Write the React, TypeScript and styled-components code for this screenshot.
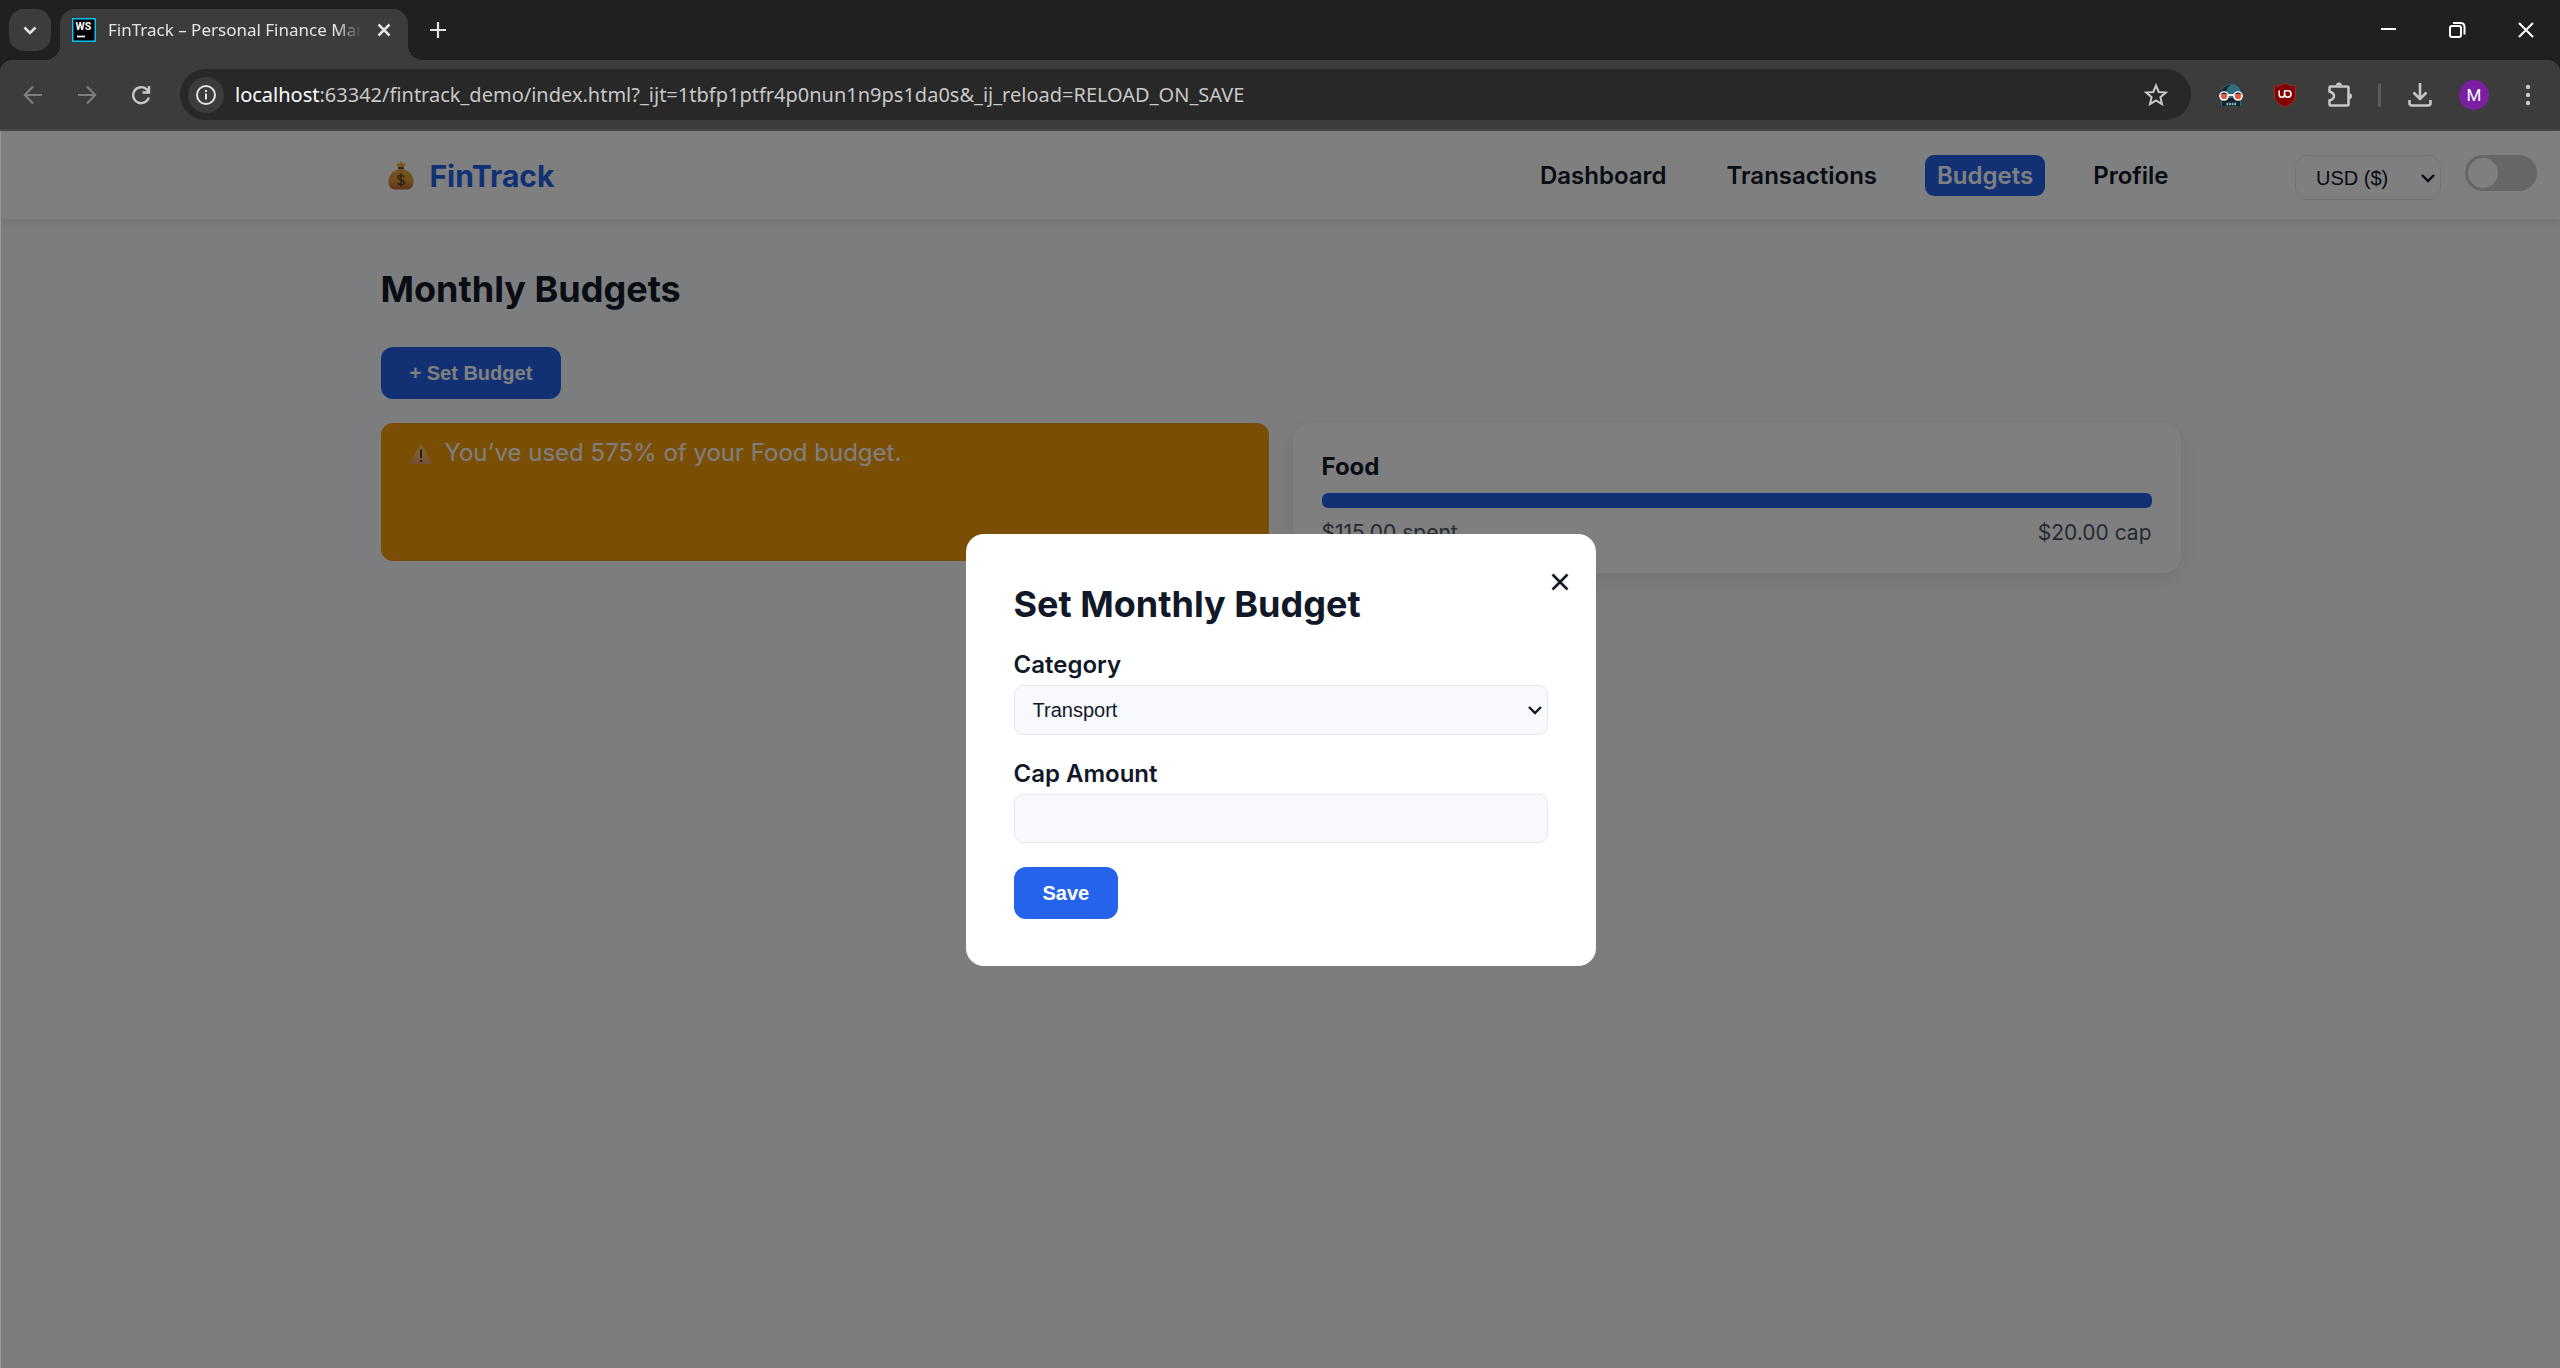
import React, { useState } from "react";
import styled, { createGlobalStyle, css } from "styled-components";

const GlobalStyle = createGlobalStyle`
  *, *::before, *::after { box-sizing: border-box; }
  body { margin: 0; background: #7c7d7e; }
  button, select, input { font: inherit; color: inherit; margin: 0; }
  h1, h2, h3, p { margin: 0; }
`;

const uiFont = `"Noto Sans", "Open Sans", sans-serif`;
const pageFont = `Inter, "Liberation Sans", sans-serif`;
const controlFont = `"Liberation Sans", Arial, sans-serif`;

const Shell = styled.div`
  display: flex;
  flex-direction: column;
  min-height: 100vh;
  background: #1f2120;
`;

/* ---------- browser window ---------- */

const IconButton = styled.button<{ $w?: number; $dim?: boolean; $bright?: boolean }>`
  display: grid;
  place-items: center;
  flex: none;
  width: ${(p) => p.$w ?? 54}px;
  height: 42px;
  padding: 0;
  border: 0;
  background: none;
  color: ${(p) => (p.$dim ? "#7f7f7f" : p.$bright ? "#e3e3e3" : "#c7c7c7")};
  svg { display: block; }
`;

const TabStrip = styled.header`
  display: flex;
  align-items: center;
  height: 60px;
  padding: 0 0 0 9px;
`;

const TabSearch = styled(IconButton)`
  border-radius: 15px;
  background: #3c3c3c;
`;

const Tab = styled.div`
  position: relative;
  display: flex;
  align-items: center;
  align-self: flex-end;
  width: 348px;
  height: 51px;
  margin: 0 12px 0 9px;
  padding: 0 9px 9px 12px;
  border-radius: 15px 15px 0 0;
  background: #3c3c3c;
  color: #e3e3e3;
  &::before, &::after {
    content: "";
    position: absolute;
    bottom: 0;
    width: 15px;
    height: 15px;
  }
  &::before { right: 100%; background: radial-gradient(circle at 0 0, transparent 15px, #3c3c3c 15px); }
  &::after { left: 100%; background: radial-gradient(circle at 100% 0, transparent 15px, #3c3c3c 15px); }
`;

const TabTitle = styled.span`
  flex: 1;
  overflow: hidden;
  margin: 0 7px 0 12px;
  font: 17px/24px ${uiFont};
  white-space: nowrap;
  mask-image: linear-gradient(to right, #000 90%, transparent);
`;

const WindowControls = styled.div`
  display: flex;
  margin-left: auto;
`;

const WindowButton = styled(IconButton)`
  color: #fff;
`;

const Toolbar = styled.div`
  display: flex;
  align-items: center;
  height: 71px;
  padding: 0 5px 0 6px;
  border-bottom: 2px solid #484848;
  border-radius: 12px 12px 0 0;
  background: #3c3c3c;
`;

const Omnibox = styled.div`
  display: flex;
  align-items: center;
  flex: 1;
  height: 51px;
  margin: 0 13px 0 12px;
  padding: 0 8px;
  border-radius: 26px;
  background: #282828;
`;

const SiteInfo = styled(IconButton)`
  height: 36px;
  border-radius: 50%;
  background: #3c3c3c;
`;

const Address = styled.input`
  flex: 1;
  min-width: 0;
  border: 0;
  outline: 0;
  padding: 0;
  background: none;
`;

const Url = styled.label`
  display: flex;
  flex: 1;
  align-items: center;
  margin-left: 11px;
  font: 20px/30px ${uiFont};
  color: #c7c7c7;
  span { color: #fff; }
`;

const Divider = styled.span`
  width: 3px;
  height: 24px;
  margin: 0 12px;
  border-radius: 2px;
  background: #5c5c5c;
`;

const Avatar = styled.span`
  display: grid;
  place-items: center;
  width: 30px;
  height: 30px;
  border-radius: 50%;
  background: #7b1fa2;
  color: #fff;
  font: 400 17px/30px Roboto, sans-serif;
`;

/* ---------- page ---------- */

const Page = styled.div`
  position: relative;
  flex: 1;
  border-left: 1px solid #9a9a9a;
  background: #f8fafc;
  color: #111827;
  font: 24px/29px ${pageFont};
`;

const TopBar = styled.header`
  display: grid;
  grid-template-columns: 1fr minmax(0, 1800px) 1fr;
  align-items: start;
  height: 88px;
  padding-top: 24px;
  background: #fff;
  box-shadow: 0 3px 9px rgba(0, 0, 0, 0.08);
`;

const Brand = styled.a`
  display: flex;
  align-items: center;
  gap: 9px;
  margin-right: auto;
  color: #2563eb;
  font-size: 30px;
  font-weight: 700;
  line-height: 36px;
  text-decoration: none;
`;

const NavRow = styled.div`
  grid-column: 2;
  display: flex;
  align-items: center;
`;

const Nav = styled.nav`
  display: flex;
  gap: 36px;
`;

const NavLink = styled.a<{ $active?: boolean }>`
  padding: 6px 12px;
  border-radius: 9px;
  font-weight: 600;
  color: inherit;
  text-decoration: none;
  ${(p) => p.$active && css`
    background: #2563eb;
    color: #fff;
  `}
`;

const Preferences = styled.div`
  display: flex;
  align-items: flex-start;
  justify-content: flex-end;
  gap: 24px;
  padding-right: 23px;
`;

const SelectBox = styled.div<{ $plain?: boolean }>`
  display: grid;
  align-items: center;
  width: ${(p) => (p.$plain ? "146px" : "100%")};
  select, svg { grid-area: 1 / 1; }
  svg { justify-self: end; margin-right: 4px; pointer-events: none; }
`;

const fieldStyle = css`
  width: 100%;
  border: 1px solid #e5e7eb;
  font: 20px/24px ${controlFont};
  color: #111827;
  outline: 0;
`;

const Select = styled.select<{ $plain?: boolean }>`
  ${fieldStyle}
  appearance: none;
  height: ${(p) => (p.$plain ? 45 : 50)}px;
  padding: 0 ${(p) => (p.$plain ? 20 : 18)}px;
  border-radius: ${(p) => (p.$plain ? 12 : 9)}px;
  background: ${(p) => (p.$plain ? "#fff" : "#f8f9fd")};
`;

const Input = styled.input`
  ${fieldStyle}
  height: 49px;
  padding: 0 18px;
  border-radius: 9px;
  background: #f8f9fd;
`;

const Switch = styled.input`
  appearance: none;
  width: 72px;
  height: 36px;
  margin: 0;
  border-radius: 18px;
  background: #ccc;
  &::before {
    content: "";
    display: block;
    width: 30px;
    height: 30px;
    margin: 3px;
    border-radius: 50%;
    background: #fff;
  }
  &:checked::before { margin-left: 39px; }
`;

const Main = styled.main`
  display: flex;
  flex-direction: column;
  align-items: flex-start;
  gap: 24px;
  max-width: 1800px;
  margin: 0 auto;
  padding-top: 48px;
`;

const Title = styled.h1`
  font-size: 36px;
  font-weight: 700;
  line-height: 44px;
`;

const PageTitle = styled(Title)`
  margin-bottom: 12px;
`;

const PrimaryButton = styled.button`
  height: 52px;
  padding: 0 29px;
  border: 0;
  border-radius: 12px;
  background: #2563eb;
  color: #fff;
  font: 700 20px/24px ${controlFont};
`;

const BudgetGrid = styled.section`
  display: grid;
  grid-template-columns: 1fr 1fr;
  gap: 24px;
  width: 100%;
`;

const Alert = styled.p`
  display: flex;
  align-items: flex-start;
  gap: 9px;
  margin-bottom: 12px;
  padding: 15px 28px;
  border-radius: 12px;
  background: #f59e0b;
  color: #fff;
  svg { margin-top: 4px; }
`;

const Card = styled.article`
  display: flex;
  flex-direction: column;
  gap: 12px;
  padding: 29px 29px 27px;
  border-radius: 18px;
  background: #fff;
  box-shadow: 0 6px 18px rgba(0, 0, 0, 0.08);
`;

const CardTitle = styled.h2`
  font-size: 24px;
  font-weight: 700;
  line-height: 29px;
`;

const Track = styled.div`
  overflow: hidden;
  height: 15px;
  border-radius: 6px;
  background: #e5e7eb;
`;

const Fill = styled.div`
  height: 100%;
  background: #2563eb;
`;

const Totals = styled.div`
  display: flex;
  justify-content: space-between;
  color: #4b5563;
  font-size: 21px;
  line-height: 26px;
`;

const Overlay = styled.div`
  position: absolute;
  inset: 0;
  display: grid;
  place-items: center;
  background: rgba(0, 0, 0, 0.5);
`;

const Modal = styled.div`
  position: relative;
  width: 630px;
  padding: 48px 48px 47px;
  border-radius: 18px;
  background: #fff;
`;

const CloseButton = styled.button`
  position: absolute;
  top: 30px;
  right: 18px;
  display: grid;
  place-items: center;
  width: 36px;
  height: 36px;
  padding: 0;
  border: 0;
  background: none;
`;

const Form = styled.form`
  display: flex;
  flex-direction: column;
  align-items: flex-start;
  gap: 24px;
  margin-top: 24px;
`;

const Field = styled.div`
  display: flex;
  flex-direction: column;
  gap: 6px;
  width: 100%;
`;

const Label = styled.label`
  font-weight: 600;
`;

/* ---------- drawings ---------- */

const Svg = ({ s, children, w = 2 }: { s: number; children: React.ReactNode; w?: number }) => (
  <svg width={s} height={s} viewBox={`0 0 ${s} ${s}`} fill="none" stroke="currentColor" strokeWidth={w} aria-hidden="true">
    {children}
  </svg>
);

const Chevron = () => <Svg s={18} w={2.4}><path d="M3 6l6 6 6-6" /></Svg>;

const Favicon = () => (
  <svg width="24" height="24" viewBox="0 0 24 24" aria-hidden="true">
    <rect x="0.75" y="0.75" width="22.5" height="22.5" fill="#000" stroke="#07c3f2" strokeWidth="1.5" />
    <text x="3.500" y="12" fill="#fff" fontFamily="Roboto, sans-serif" fontSize="10.500" fontWeight="700">WS</text>
    <path d="M5 18.500h8" stroke="#fff" strokeWidth="1.700" />
  </svg>
);

const MoneyBag = () => (
  <svg width="40" height="32" viewBox="0 0 40 32" aria-hidden="true">
    <defs>
      <linearGradient id="bag" x1="0" y1="0" x2="0" y2="1">
        <stop offset="0" stopColor="#e0a83c" />
        <stop offset="0.55" stopColor="#e59f38" />
        <stop offset="1" stopColor="#c4603c" />
      </linearGradient>
    </defs>
    <path d="M15.500 3.500l3 .2L20 1l1.500 2.700 3-.2-1.500 4h-6z" fill="#f5a93b" />
    <rect x="17" y="7" width="6" height="2.500" rx="1" fill="#7a4a2a" />
    <path d="M17 9.500h6c6 1.500 9.500 6.500 9.500 12.500 0 5-3 7.500-7 7.500h-11c-4 0-7-2.500-7-7.500C7.500 16 11 11 17 9.500z" fill="url(#bag)" />
    <path d="M23 17.200c-.5-1.300-1.600-1.900-3-1.900-1.800 0-3 .9-3 2.300 0 3.300 6.200 1.500 6.200 4.800 0 1.500-1.300 2.400-3.200 2.400-1.500 0-2.800-.7-3.300-2M20 13.500v13.500" fill="none" stroke="#6a4428" strokeWidth="1.600" />
  </svg>
);

const Warning = () => (
  <svg width="27" height="24" viewBox="0 0 27 24" aria-hidden="true">
    <defs>
      <linearGradient id="warn" x1="0" y1="0" x2="0" y2="1">
        <stop offset="0" stopColor="#eccb58" />
        <stop offset="0.5" stopColor="#f4c060" />
        <stop offset="1" stopColor="#f09a68" />
      </linearGradient>
    </defs>
    <path d="M12 1.500L24 22H0z" fill="url(#warn)" />
    <path d="M12 7.500v8.500M12 18v2" stroke="#3c3040" strokeWidth="1.800" />
  </svg>
);

const Spectacles = () => (
  <svg width="24" height="24" viewBox="0 0 24 24" aria-hidden="true">
    <path d="M2 23V11C2 4 7 1 12 1s10 3 10 10v12z" fill="#2f6f80" />
    <path d="M2 10C3 5 7 2 12 1.500 8.500 4 8 6 7 9z" fill="#15242b" />
    <path d="M3 15h18v8H3z" fill="#15242b" />
    <circle cx="5" cy="13" r="4" fill="#e8593a" stroke="#fff" strokeWidth="1.700" />
    <circle cx="19" cy="13" r="4" fill="#e8593a" stroke="#fff" strokeWidth="1.700" />
    <path d="M1.500 11q3.500-3 7 0zM15.500 11q3.500-3 7 0z" fill="#15242b" />
    <path d="M9 12h6" stroke="#fff" strokeWidth="1.700" />
    <path d="M7.500 21h9.500" stroke="#7fc4d4" strokeWidth="2.500" strokeDasharray="1.700 0.900" />
  </svg>
);

const Shield = () => (
  <svg width="24" height="26" viewBox="0 0 24 26" aria-hidden="true">
    <path d="M12 1c3 2 6 3 10.500 3v9c0 6-4 9-10.500 12C5.500 22 1.500 19 1.500 13V4C6 4 9 3 12 1z" fill="#800000" stroke="#a33" strokeWidth="0.800" />
    <path d="M6.200 8.500v4q0 2.700 2.700 2.700t2.700-2.700V8.500" fill="none" stroke="#fff" strokeWidth="1.600" />
    <path d="M11.600 8.800h3.200a3.200 3.200 0 1 1-3.200 3.200" fill="none" stroke="#fff" strokeWidth="1.600" />
  </svg>
);

const Puzzle = () => (
  <Svg s={28} w={2.5}>
    <path d="M5.500 5.500h17q1 0 1 1v17q0 1-1 1h-17q-1 0-1-1v-4q4.500-1.500 4.500-4.500t-4.500-4.500v-4q0-1 1-1z" />
    <path d="M11 4.500a3 3 0 0 1 6 0zM24 12.200a3 3 0 0 1 0 6z" fill="currentColor" stroke="none" />
  </Svg>
);

const navItems = ["Dashboard", "Transactions", "Budgets", "Profile"];
const categories = ["Food", "Transport", "Housing", "Entertainment"];
const budget = { name: "Food", spent: 115, cap: 20 };

export default function App() {
  const [category, setCategory] = useState("Transport");
  const [amount, setAmount] = useState("");
  const used = budget.spent / budget.cap;

  return (
    <Shell>
      <GlobalStyle />
      <TabStrip>
        <TabSearch $bright $w={42} aria-label="Search tabs"><Svg s={18} w={2.5}><path d="M3.500 6.500L9 12l5.500-5.500" /></Svg></TabSearch>
        <Tab>
          <Favicon />
          <TabTitle>FinTrack – Personal Finance Manager</TabTitle>
          <IconButton $bright $w={30} aria-label="Close tab"><Svg s={18} w={2.5}><path d="M3.500 3.500l11 11M14.500 3.500l-11 11" /></Svg></IconButton>
        </Tab>
        <IconButton $bright $w={36} aria-label="New tab"><Svg s={18} w={2.2}><path d="M9 1v16M1 9h16" /></Svg></IconButton>
        <WindowControls>
          <WindowButton $w={69} aria-label="Minimize"><Svg s={18}><path d="M2 8h15" /></Svg></WindowButton>
          <WindowButton $w={69} aria-label="Restore">
            <Svg s={18}><rect x="2" y="5" width="11" height="11" rx="2" /><path d="M5 2h7.500q4 0 4 4v7.500" /></Svg>
          </WindowButton>
          <WindowButton $w={69} aria-label="Close"><Svg s={18}><path d="M2 2l14 14M16 2L2 16" /></Svg></WindowButton>
        </WindowControls>
      </TabStrip>

      <Toolbar>
        <IconButton $dim aria-label="Back"><Svg s={20}><path d="M19 10H2M10 1.500L1.800 10 10 18.500" /></Svg></IconButton>
        <IconButton $dim aria-label="Forward"><Svg s={20}><path d="M1 10h17M10 1.500l8.200 8.500-8.200 8.500" /></Svg></IconButton>
        <IconButton aria-label="Reload"><Svg s={20} w={2.4}><path d="M17.800 12.500A8 8 0 1 1 15.500 4.200L18 7M18 1v6.500h-6.500" /></Svg></IconButton>
        <Omnibox>
          <SiteInfo $bright $w={36} aria-label="Site information">
            <Svg s={22}><circle cx="11" cy="11" r="9" /><path d="M11 9.500v6M11 6v2" /></Svg>
          </SiteInfo>
          <Url>
            <span>localhost</span>
            <Address aria-label="Address" readOnly value=":63342/fintrack_demo/index.html?_ijt=1tbfp1ptfr4p0nun1n9ps1da0s&_ij_reload=RELOAD_ON_SAVE" />
          </Url>
          <IconButton aria-label="Bookmark this page">
            <Svg s={24}><path d="M12 2.500l2.700 6.500 7 .6-5.300 4.600 1.600 6.900-6-3.700-6 3.700 1.600-6.900L2.300 9.600l7-.6z" /></Svg>
          </IconButton>
        </Omnibox>
        <IconButton aria-label="Extension"><Spectacles /></IconButton>
        <IconButton aria-label="Ad blocker"><Shield /></IconButton>
        <IconButton aria-label="Extensions"><Puzzle /></IconButton>
        <Divider />
        <IconButton aria-label="Downloads">
          <Svg s={24} w={2.6}><path d="M12 0v15M5.500 9.500L12 16l6.500-6.500M1.500 17v3q0 2.500 2.500 2.500h16q2.500 0 2.500-2.500v-3" /></Svg>
        </IconButton>
        <IconButton aria-label="Profile"><Avatar>M</Avatar></IconButton>
        <IconButton aria-label="Menu">
          <Svg s={22} w={0}><g fill="currentColor"><circle cx="11" cy="3" r="2.200" /><circle cx="11" cy="11" r="2.200" /><circle cx="11" cy="19" r="2.200" /></g></Svg>
        </IconButton>
      </Toolbar>

      <Page>
        <TopBar>
          <NavRow>
            <Brand href="#"><MoneyBag />FinTrack</Brand>
            <Nav>
              {navItems.map((item) => (
                <NavLink key={item} href={`#${item.toLowerCase()}`} $active={item === "Budgets"}>{item}</NavLink>
              ))}
            </Nav>
          </NavRow>
          <Preferences>
            <SelectBox $plain>
              <Select $plain aria-label="Currency" defaultValue="USD">
                <option value="USD">USD ($)</option>
                <option value="EUR">EUR (€)</option>
              </Select>
              <Chevron />
            </SelectBox>
            <Switch type="checkbox" aria-label="Dark mode" />
          </Preferences>
        </TopBar>

        <Main>
          <PageTitle>Monthly Budgets</PageTitle>
          <PrimaryButton type="button">+ Set Budget</PrimaryButton>
          <BudgetGrid>
            <Alert><Warning />You’ve used {Math.round(used * 100)}% of your {budget.name} budget.</Alert>
            <Card>
              <CardTitle>{budget.name}</CardTitle>
              <Track><Fill style={{ width: `${Math.min(used, 1) * 100}%` }} /></Track>
              <Totals>
                <span>${budget.spent.toFixed(2)} spent</span>
                <span>${budget.cap.toFixed(2)} cap</span>
              </Totals>
            </Card>
          </BudgetGrid>
        </Main>

        <Overlay>
          <Modal role="dialog" aria-modal="true" aria-labelledby="budget-title">
            <CloseButton type="button" aria-label="Close dialog">
              <Svg s={18} w={2.6}><path d="M1.500 1.500l15 15M16.500 1.500l-15 15" /></Svg>
            </CloseButton>
            <Title as="h2" id="budget-title">Set Monthly Budget</Title>
            <Form onSubmit={(e) => e.preventDefault()}>
              <Field>
                <Label htmlFor="category">Category</Label>
                <SelectBox>
                  <Select id="category" value={category} onChange={(e) => setCategory(e.target.value)}>
                    {categories.map((c) => <option key={c}>{c}</option>)}
                  </Select>
                  <Chevron />
                </SelectBox>
              </Field>
              <Field>
                <Label htmlFor="cap">Cap Amount</Label>
                <Input id="cap" value={amount} onChange={(e) => setAmount(e.target.value)} />
              </Field>
              <PrimaryButton type="submit">Save</PrimaryButton>
            </Form>
          </Modal>
        </Overlay>
      </Page>
    </Shell>
  );
}
